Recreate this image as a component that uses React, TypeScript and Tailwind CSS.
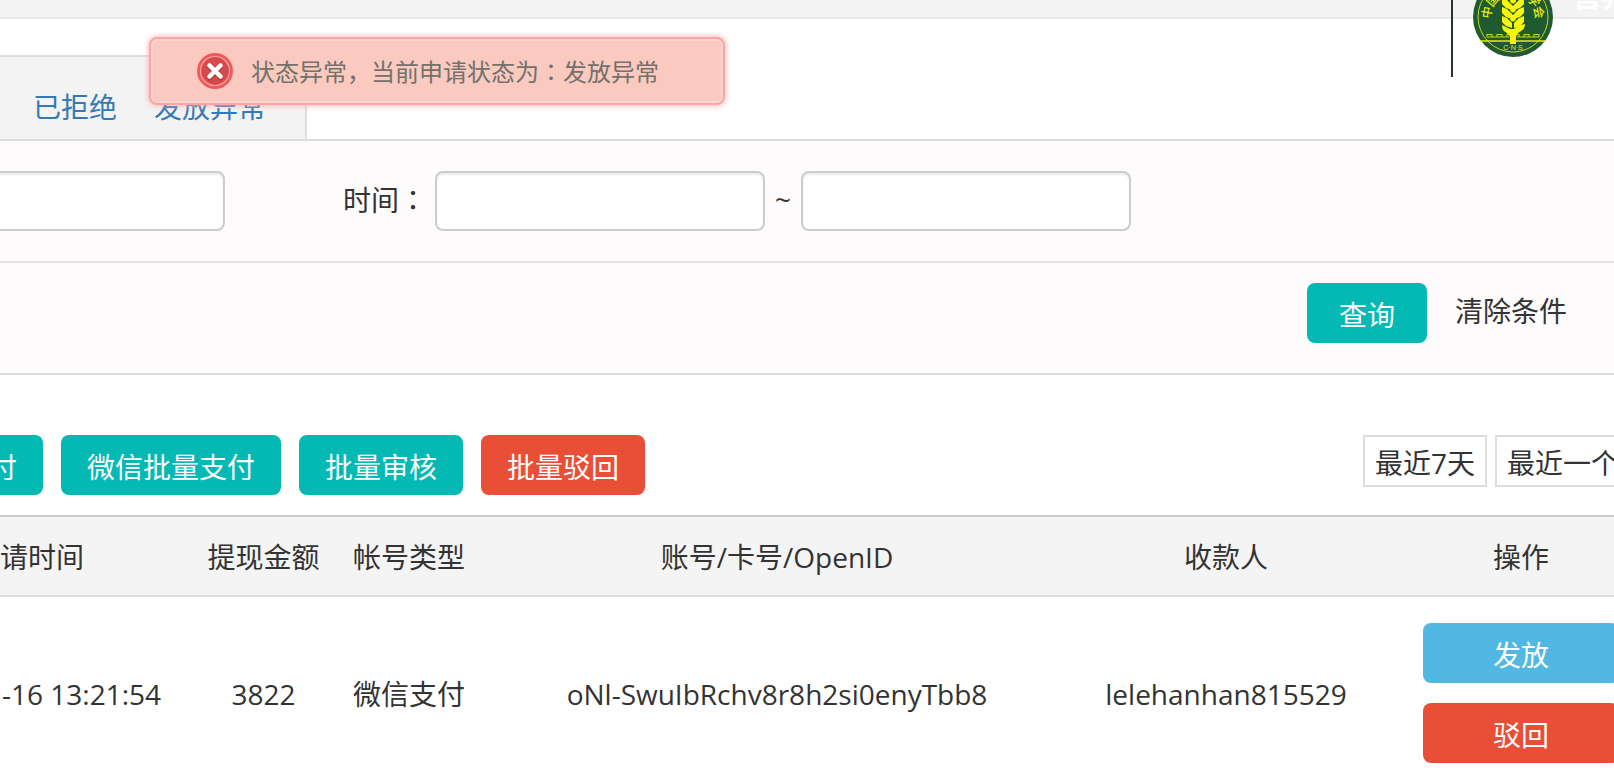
import type { InputHTMLAttributes } from "react"
import { clsx } from "clsx"

const TABS = ["已拒绝", "发放异常"]

const RECORDS = [
  {
    time: "-16 13:21:54",
    amount: "3822",
    type: "微信支付",
    account: "oNl-SwuIbRchv8r8h2si0enyTbb8",
    payee: "lelehanhan815529",
  },
]

const TONES = {
  teal: "bg-[#04b9b4]",
  red: "bg-[#e94f37]",
  blue: "bg-[#50b8e2]",
}

function Button({
  tone,
  className,
  children,
}: {
  tone: keyof typeof TONES
  className?: string
  children: string
}) {
  return (
    <button
      type="button"
      className={clsx(
        "h-[60px] shrink-0 whitespace-nowrap rounded-lg pt-1 text-white",
        TONES[tone],
        className
      )}
    >
      {children}
    </button>
  )
}

function TextBox({ className, ...rest }: InputHTMLAttributes<HTMLInputElement>) {
  return (
    <input
      type="text"
      className={clsx(
        "h-[60px] rounded-lg border-2 border-[#ccc] bg-white px-4 shadow-[inset_0_2px_2px_rgba(0,0,0,0.075)] outline-none",
        className
      )}
      {...rest}
    />
  )
}

// The TC face centres the full-width colon in its cell.
function Colon() {
  return <span className="font-['Noto_Sans_CJK_TC',sans-serif]">：</span>
}

// Round society seal: wheat ear over a woven band, lettering around the rim.
function Seal() {
  const rim = [
    { char: "中", angle: -80 },
    { char: "国", angle: -50 },
    { char: "学", angle: 52 },
    { char: "会", angle: 80 },
  ]
  return (
    <svg viewBox="-40 -40 80 80" className="size-20 shrink-0" aria-hidden="true">
      <circle r="40" fill="#1f5a31" />
      <circle r="35" fill="none" stroke="#c9d916" strokeWidth="1" />
      {rim.map(({ char, angle }) => (
        <text
          key={char}
          transform={`rotate(${angle}) translate(0 -22)`}
          textAnchor="middle"
          fontSize="12"
          fontWeight="500"
          fill="#e6ec12"
        >
          {char}
        </text>
      ))}
      <g fill="#f8f808">
        {[-19, -10, -1].map((y) => (
          <g key={y}>
            <path d={`M-11 ${y} L-6 ${y + 2} L-1 ${y + 7} V${y + 12} L-7 ${y + 10} L-11 ${y + 6} Z`} />
            <path d={`M11 ${y} L6 ${y + 2} L1 ${y + 7} V${y + 12} L7 ${y + 10} L11 ${y + 6} Z`} />
            <ellipse cx="0" cy={y + 2} rx="3" ry="3.4" />
          </g>
        ))}
        <path d="M-11 8 L-3 12 H1 Q5 8 12 7 Q12 12 8 14 Q3 17 3 21 V27 H-3 V20 Q-4 17 -9 14 Q-11 12 -11 8 Z" />
      </g>
      <path
        d="M-26 20 V17.5 H-21 V20 H-16 V17.5 H-11 V20 H-6 V17.5 H-4 M4 17.5 H6 V20 H11 V17.5 H16 V20 H21 V17.5 H26 V20 M-26 20 H-4 M4 20 H26"
        fill="none"
        stroke="#c9d916"
        strokeWidth="1.1"
      />
      <path d="M-33 24 H33" stroke="#e6ec12" strokeWidth="1.4" />
      <text
        y="33"
        textAnchor="middle"
        fontSize="7"
        className="font-['Liberation_Sans',sans-serif]"
        fill="#e6ec12"
      >
        C·N·S
      </text>
    </svg>
  )
}

function ErrorIcon() {
  return (
    <svg viewBox="0 0 36 36" className="size-9 shrink-0" aria-hidden="true">
      <circle cx="18" cy="18" r="18" fill="#ef5a5a" />
      <circle cx="18" cy="18" r="14.5" fill="#d64a4e" stroke="#f7a3a0" strokeWidth="1.2" />
      <path
        d="M12.5 14.5 L23.5 25.5 M23.5 14.5 L12.5 25.5"
        stroke="#9c2f35"
        strokeWidth="4.5"
        strokeLinecap="round"
        opacity="0.5"
      />
      <path
        d="M12.5 12.5 L23.5 23.5 M23.5 12.5 L12.5 23.5"
        stroke="#fff"
        strokeWidth="4.5"
        strokeLinecap="round"
      />
    </svg>
  )
}

export default function App() {
  return (
    <div className="relative min-h-screen overflow-hidden bg-white font-['Open_Sans','Noto_Sans_CJK_SC',sans-serif] text-[28px] leading-10 text-[#333]">
      <header className="h-[19px] border-b-2 border-[#ebebeb] bg-[#f3f3f3]" />

      {/* The brand block hangs below the thin header strip. */}
      <div className="absolute top-0 right-0 flex h-[77px] w-[163px] overflow-hidden border-[#263238] border-l-2 pl-5">
        <div className="-mt-[23px]">
          <Seal />
        </div>
        <span className="-mt-5 ml-5 shrink-0 whitespace-nowrap font-bold text-white leading-8">
          营养
        </span>
      </div>

      <div
        role="alert"
        className="absolute top-[37px] left-[149px] flex h-[68px] w-[576px] items-center gap-[18px] rounded-lg border-2 border-[#fca5a5] bg-[#fac9c0] pl-[46px] text-2xl text-[#73716a] shadow-[0_0_6px_#fca5a5,inset_0_0_0_2px_#fbd5d0]"
      >
        <ErrorIcon />
        <span className="whitespace-nowrap">
          状态异常，当前申请状态为
          <Colon />
          发放异常
        </span>
      </div>

      <nav className="mt-9 flex h-[86px] border-[#ddd] border-b-2">
        <div className="flex w-[307px] items-end gap-[37px] border-[#ddd] border-t-2 border-r-2 bg-[#f3f3f3] pb-3 pl-[33px]">
          {TABS.map((tab) => (
            <a key={tab} href="#" className="whitespace-nowrap text-[#337ab7]">
              {tab}
            </a>
          ))}
        </div>
      </nav>

      <form className="bg-[#fdfbfc]">
        <div className="flex h-[122px] items-center border-[#e4e2e3] border-b-2">
          <TextBox aria-label="关键字" className="-ml-3 w-[237px]" />
          <label htmlFor="from" className="ml-[118px] w-[92px] whitespace-nowrap pb-1">
            时间
            <Colon />
          </label>
          <TextBox id="from" className="w-[330px]" />
          <span className="w-9 pb-1 text-center">~</span>
          <TextBox aria-label="结束时间" className="w-[330px]" />
        </div>
        <div className="flex h-28 items-center justify-end gap-7 border-[#ddd] border-b-2 pr-[47px] pb-2.5">
          <Button tone="teal" className="w-[120px]">
            查询
          </Button>
          <button type="reset" className="whitespace-nowrap pb-1">
            清除条件
          </button>
        </div>
      </form>

      <div className="flex items-start justify-between pt-[60px] pb-5">
        <div className="flex gap-[18px]">
          <Button tone="teal" className="-ml-[37px] px-[26px]">
            付
          </Button>
          <Button tone="teal" className="px-[26px]">
            微信批量支付
          </Button>
          <Button tone="teal" className="px-[26px]">
            批量审核
          </Button>
          <Button tone="red" className="px-[26px]">
            批量驳回
          </Button>
        </div>
        <div className="flex w-[251px] gap-2">
          {["最近7天", "最近一个月"].map((range) => (
            <button
              key={range}
              type="button"
              className="h-[52px] shrink-0 whitespace-nowrap border-2 border-[#ddd] px-2.5 pt-1"
            >
              {range}
            </button>
          ))}
        </div>
      </div>

      {/* Runs past the right edge, where the action column is cut off. */}
      <table className="w-[calc(100%+48px)] table-fixed border-collapse text-center">
        <thead className="border-[#ccc] border-t-2 border-b-2 border-b-[#ddd] bg-[#f4f4f4]">
          <tr className="h-20 whitespace-nowrap *:pt-0.5 *:font-normal">
            <th scope="col" className="w-[191px] text-left">
              请时间
            </th>
            <th scope="col" className="w-[145px]">
              提现金额
            </th>
            <th scope="col" className="w-[146px]">
              帐号类型
            </th>
            <th scope="col">账号/卡号/OpenID</th>
            <th scope="col" className="w-[308px]">
              收款人
            </th>
            <th scope="col" className="w-[282px]">
              操作
            </th>
          </tr>
        </thead>
        <tbody>
          {RECORDS.map((record) => (
            <tr key={record.account} className="whitespace-nowrap">
              <td className="pl-0.5 text-left">{record.time}</td>
              <td>{record.amount}</td>
              <td>{record.type}</td>
              <td>{record.account}</td>
              <td>{record.payee}</td>
              <td>
                <div className="flex flex-col items-center gap-5 pt-[26px] pb-7">
                  <Button tone="blue" className="w-[196px]">
                    发放
                  </Button>
                  <Button tone="red" className="w-[196px]">
                    驳回
                  </Button>
                </div>
              </td>
            </tr>
          ))}
        </tbody>
      </table>
    </div>
  )
}
